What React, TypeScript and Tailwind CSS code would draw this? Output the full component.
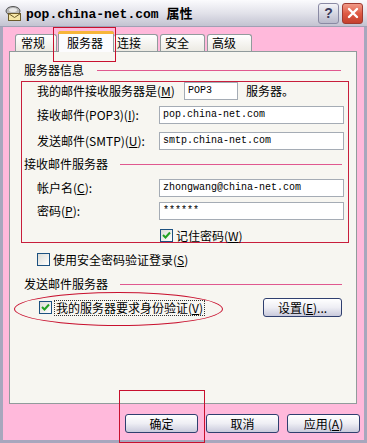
import React from 'react';

const cjk = { fontFamily: '"Noto Sans CJK SC", "Liberation Sans", sans-serif' };
const mono = { fontFamily: '"Liberation Mono", "Noto Sans CJK SC", monospace' };

function MailIcon() {
  return (
    <svg width="17" height="16" viewBox="0 0 17 16">
      <ellipse cx="8" cy="6" rx="7" ry="4.5" fill="#b8b8b8" stroke="#555" strokeWidth="1" />
      <ellipse cx="8" cy="5" rx="4" ry="2" fill="#e8e8e8" />
      <rect x="3.5" y="8.5" width="12" height="7" fill="#f6e7a6" stroke="#6b5a2a" strokeWidth="1" />
      <path d="M3.5 8.5 L9.5 12.5 L15.5 8.5" fill="none" stroke="#6b5a2a" strokeWidth="1" />
    </svg>
  );
}

function Check({ checked }: { checked?: boolean }) {
  return (
    <span className="w-[13px] h-[13px] shrink-0 border border-[#1c5180] bg-linear-to-br from-[#dcdcd6] to-white flex items-center justify-center">
      {checked && (
        <svg width="9" height="9" viewBox="0 0 9 9">
          <path d="M1 4 L3.5 6.5 L8 1.5" fill="none" stroke="#21a121" strokeWidth="2" />
        </svg>
      )}
    </span>
  );
}

function Field({ value, w }: { value: string; w: string }) {
  return (
    <div
      className={`${w} h-[18px] border border-[#a5acb5] bg-white flex items-center pl-[3px] text-[10px] text-black`}
      style={mono}
    >
      {value}
    </div>
  );
}

function Header({ title, lineGap, right }: { title: string; lineGap: string; right: string }) {
  return (
    <div className={`h-[14px] flex items-center ${right}`}>
      <span className="text-[12px] leading-none">{title}</span>
      <div className={`flex-1 h-px bg-[#e0588f] ${lineGap}`} />
    </div>
  );
}

function XpButton({ children, w }: { children: React.ReactNode; w: string }) {
  return (
    <div
      className={`${w} h-[19px] rounded-[3px] border border-[#2f3f6f] bg-linear-to-b from-white via-[#eeeef4] to-[#c9cadc] flex items-center justify-center text-[12px] leading-none`}
    >
      {children}
    </div>
  );
}

export default function App() {
  return (
    <div className="relative w-[367px] h-[443px] flex flex-col overflow-hidden text-black" style={cjk}>
      {/* Title bar */}
      <div className="h-[27px] shrink-0 flex items-center pl-[5px] pr-[4px] bg-linear-to-b from-[#fbfbfd] via-[#e2e2ea] to-[#c3c3d1] border-b border-[#a0a0b4]">
        <MailIcon />
        <span className="ml-[4px] text-[13px] font-bold leading-none" style={mono}>
          pop.china-net.com <span style={cjk}>属性</span>
        </span>
        <div className="ml-auto flex gap-[3px]">
          <div className="w-[21px] h-[21px] rounded-[3px] border border-[#8a8aa4] bg-linear-to-b from-[#f4f4f8] to-[#b9bacb] flex items-center justify-center text-[14px] font-bold text-[#3a3a5a]" style={{ fontFamily: '"Liberation Sans", sans-serif' }}>
            ?
          </div>
          <div className="w-[21px] h-[21px] rounded-[3px] border border-[#a03a30] bg-linear-to-b from-[#f09a88] via-[#de5a44] to-[#c5402e] flex items-center justify-center">
            <svg width="12" height="12" viewBox="0 0 12 12">
              <path d="M2 2 L10 10 M10 2 L2 10" stroke="white" strokeWidth="2.4" strokeLinecap="round" />
            </svg>
          </div>
        </div>
      </div>

      {/* Body */}
      <div className="flex-1 flex flex-col bg-[#ffb9db] border-x-[3px] border-b-[3px] border-[#a7a7bd]">
        {/* Tabs */}
        <div className="h-[24px] flex items-end pl-[9px] relative z-10">
          <div className="ml-[3px] w-[42px] h-[17px] border border-b-0 border-[#919b9c] rounded-t-[3px] bg-linear-to-b from-white to-[#eceae3] text-[12px] leading-none pl-[5px] pt-[2px]">常规</div>
          <div className="ml-[1px] w-[56px] h-[21px] -mb-px border border-b-0 border-[#919b9c] rounded-t-[3px] bg-[#fcfcfe] text-[12px] leading-none pl-[8px] pt-[5px] relative">
            <div className="absolute -top-px -left-px -right-px h-[3px] rounded-t-[3px] bg-[#f7b53a]" />
            服务器
          </div>
          <div className="w-[44px] h-[17px] border border-b-0 border-l-0 border-[#919b9c] rounded-t-[3px] bg-linear-to-b from-white to-[#eceae3] text-[12px] leading-none pl-[3px] pt-[2px]">连接</div>
          <div className="ml-[2px] w-[45px] h-[17px] border border-b-0 border-[#919b9c] rounded-t-[3px] bg-linear-to-b from-white to-[#eceae3] text-[12px] leading-none pl-[4px] pt-[2px]">安全</div>
          <div className="ml-[2px] w-[45px] h-[17px] border border-b-0 border-[#919b9c] rounded-t-[3px] bg-linear-to-b from-white to-[#eceae3] text-[12px] leading-none pl-[4px] pt-[2px]">高级</div>
        </div>

        {/* Panel */}
        <div className="relative ml-[6px] w-[348px] h-[353px] border border-[#919b9c] bg-[#f7f6f1] flex flex-col">
          <div className="mt-[11px]">
            <Header title="服务器信息" lineGap="ml-[13px]" right="pl-[14px] pr-[15px]" />
          </div>

          <div className="mt-[4px] ml-[11px] w-[328px] h-[162px] border border-[#c81e3c] flex flex-col">
            <div className="h-[18px] flex items-center pl-[15px] text-[12px] leading-none">
              <span className="w-[147px]">我的邮件接收服务器是(<u>M</u>)</span>
              <Field value="POP3" w="w-[54px]" />
              <span className="ml-[8px]">服务器。</span>
            </div>
            <div className="mt-[6px] h-[18px] flex items-center pl-[15px] text-[12px] leading-none">
              <span className="w-[122px]">接收邮件(POP3)(<u>I</u>):</span>
              <Field value="pop.china-net.com" w="w-[185px]" />
            </div>
            <div className="mt-[8px] h-[18px] flex items-center pl-[15px] text-[12px] leading-none">
              <span className="w-[122px]">发送邮件(SMTP)(<u>U</u>):</span>
              <Field value="smtp.china-net.com" w="w-[185px]" />
            </div>
            <div className="mt-[7px]">
              <Header title="接收邮件服务器" lineGap="ml-[12px]" right="pl-[2px] pr-[6px]" />
            </div>
            <div className="mt-[8px] h-[18px] flex items-center pl-[15px] text-[12px] leading-none">
              <span className="w-[122px]">帐户名(<u>C</u>):</span>
              <Field value="zhongwang@china-net.com" w="w-[185px]" />
            </div>
            <div className="mt-[5px] h-[18px] flex items-center pl-[15px] text-[12px] leading-none">
              <span className="w-[122px]">密码(<u>P</u>):</span>
              <Field value="******" w="w-[185px]" />
            </div>
            <div className="mt-[9px] h-[13px] flex items-center pl-[138px] text-[12px] leading-none">
              <Check checked />
              <span className="ml-[3px]">记住密码(<u>W</u>)</span>
            </div>
          </div>

          <div className="mt-[10px] h-[13px] flex items-center pl-[27px] text-[12px] leading-none">
            <Check />
            <span className="ml-[3px]">使用安全密码验证登录(<u>S</u>)</span>
          </div>

          <div className="mt-[11px]">
            <Header title="发送邮件服务器" lineGap="ml-[12px]" right="pl-[14px] pr-[14px]" />
          </div>

          <div className="mt-[7px] h-[19px] flex items-center pl-[29px] pr-[14px] text-[12px] leading-none">
            <Check checked />
            <span className="ml-[2px] border border-dotted border-[#333] px-px py-[1px]">我的服务器要求身份验证(<u>V</u>)</span>
            <div className="ml-auto">
              <XpButton w="w-[79px]">设置(<u>E</u>)...</XpButton>
            </div>
          </div>

          {/* annotation ellipse */}
          <div className="absolute left-[4px] top-[240px] w-[209px] h-[34px] rounded-[50%] border border-[#c8102e]" />
        </div>

        {/* Bottom buttons */}
        <div className="mt-[10px] flex justify-end gap-[8px] pr-[4px]">
          <XpButton w="w-[73px]">确定</XpButton>
          <XpButton w="w-[73px]">取消</XpButton>
          <XpButton w="w-[73px]">应用(<u>A</u>)</XpButton>
        </div>
      </div>

      {/* annotation rectangles */}
      <div className="absolute left-[53px] top-[27px] w-[63px] h-[35px] border border-[#c8102e] z-20" />
      <div className="absolute left-[119px] top-[390px] w-[86px] h-[53px] border border-[#c8102e] z-20" />
    </div>
  );
}
